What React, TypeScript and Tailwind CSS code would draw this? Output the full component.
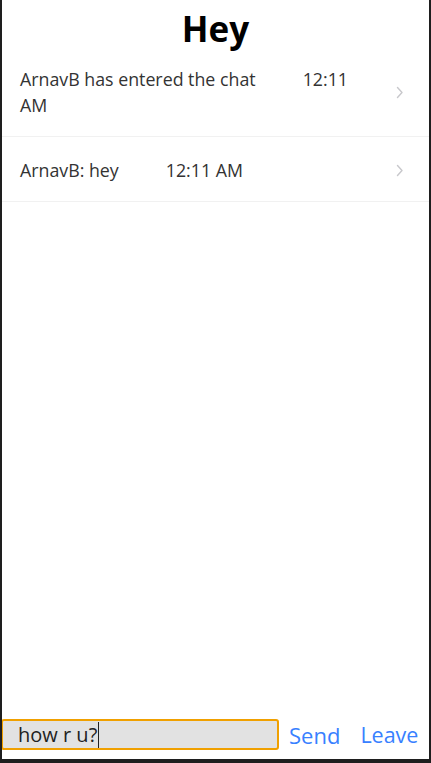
import React from 'react';

type Message = { id: number; text: string; time: string };

const messages: Message[] = [
  { id: 1, text: 'ArnavB has entered the chat', time: '12:11 AM' },
  { id: 2, text: 'ArnavB: hey', time: '12:11 AM' },
];

const Chevron: React.FC = () => (
  <svg width="8" height="13" viewBox="0 0 8 13" fill="none" className="shrink-0">
    <path d="M1.5 1.5 L6 6.5 L1.5 11.5" stroke="#c8c8cc" strokeWidth="1.4" strokeLinecap="round" strokeLinejoin="round" />
  </svg>
);

const MessageRow: React.FC<{ msg: Message; first?: boolean }> = ({ msg, first }) => (
  <div
    className={`flex items-center border-b border-[#f1f1f1] pl-[18px] pr-[25px] pb-[18px] ${first ? 'pt-[10px]' : 'pt-[20px]'}`}
  >
    <p className="flex-1 pr-[31px] text-[17.8px] leading-[26px] text-[#333333]">
      {msg.text}
      <span className="ml-[47px]">{msg.time}</span>
    </p>
    <Chevron />
  </div>
);

export default function App(): JSX.Element {
  return (
    <div
      className="flex h-[763px] w-[431px] flex-col overflow-hidden border-b-4 border-l-2 border-r-2 border-[#1e1e1e] bg-white"
      style={{ fontFamily: '"Open Sans", "Noto Sans", sans-serif' }}
    >
      <h1 className="pt-[1px] text-center text-[35px] font-bold leading-[55px] text-black">Hey</h1>
      <div className="flex flex-col">
        {messages.map((m, i) => (
          <MessageRow key={m.id} msg={m} first={i === 0} />
        ))}
      </div>
      <div className="flex-1" />
      <div className="flex items-center pb-[9px]">
        <div className="-ml-[1px] flex h-[31px] w-[278px] items-center rounded-[3px] border-2 border-[#f0a000] bg-[#e2e2e2] pl-[15px]">
          <span className="text-[20px] leading-none text-[#222222]">how r u?</span>
          <span className="ml-[1px] h-[26px] w-px bg-[#222222]" />
        </div>
        <button className="ml-[10px] text-[22px] leading-none text-[#3880ff]">Send</button>
        <button className="ml-[20px] text-[21.5px] leading-none text-[#3880ff]">Leave</button>
      </div>
    </div>
  );
}
